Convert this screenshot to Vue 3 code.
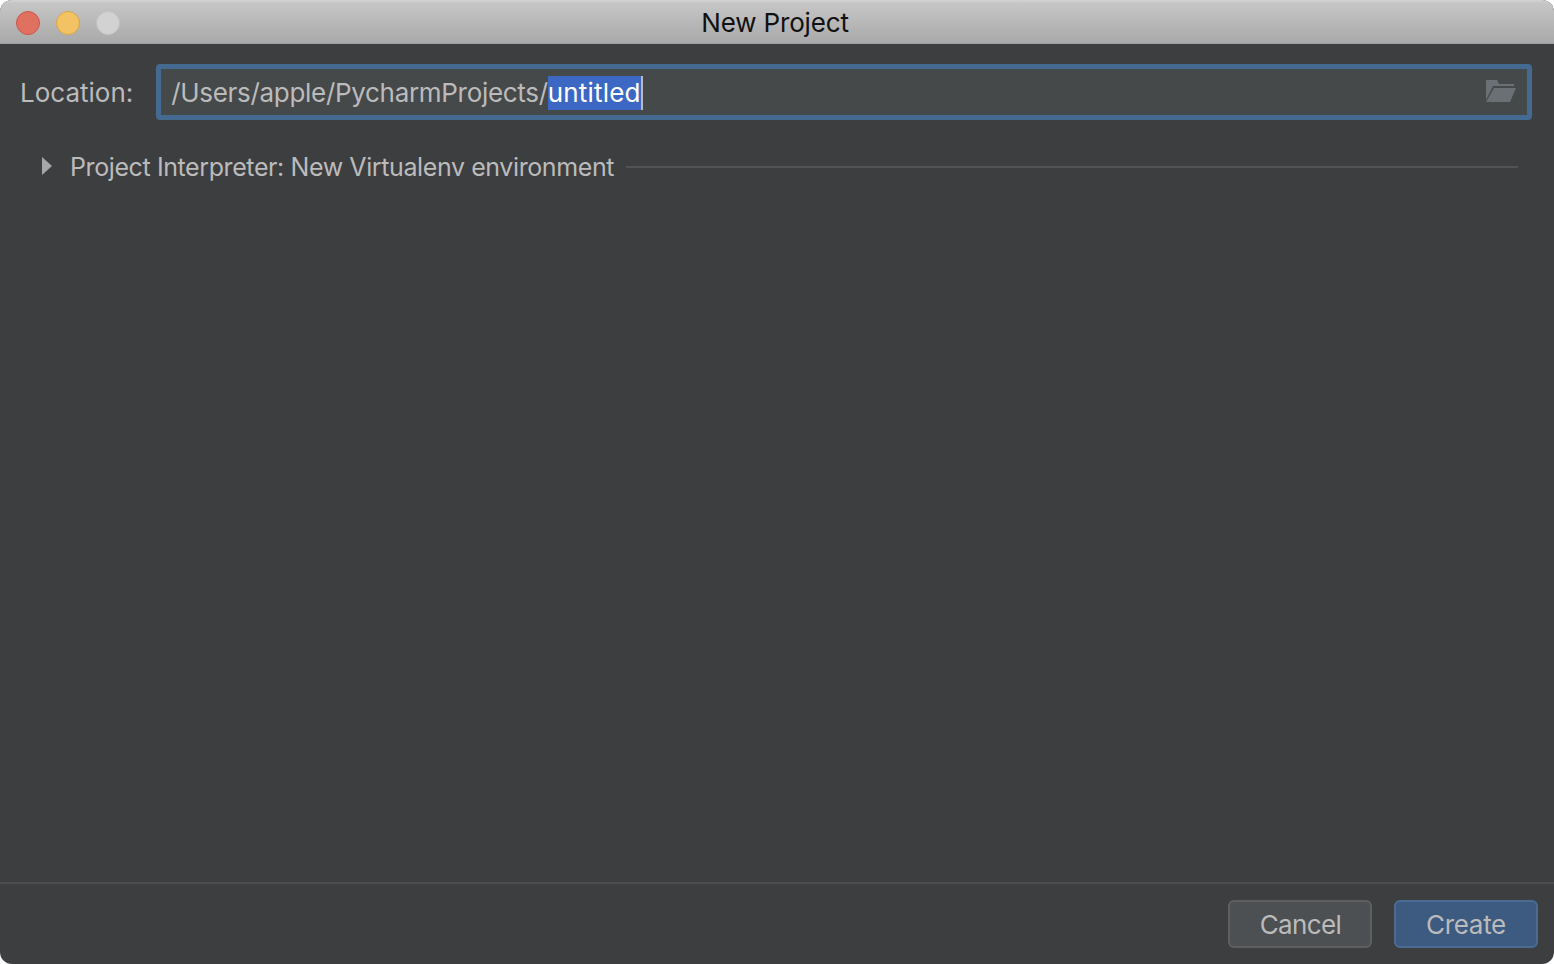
<script setup>
const lights = ['red', 'yellow', 'grey']
</script>

<template>
  <div class="window">
    <header class="titlebar">
      <div class="lights">
        <span v-for="l in lights" :key="l" class="light" :class="l"></span>
      </div>
      <div class="title">New Project</div>
      <div></div>
    </header>

    <main class="content">
      <div class="location">
        <label class="label">Location:</label>
        <div class="field">
          <div class="value">/Users/apple/PycharmProjects/<span class="sel">untitled</span><span class="caret"></span></div>
          <svg class="folder" width="30" height="24" viewBox="0 0 30 24">
            <path d="M0 0h11l2 4h15v2H7L0 20z" fill="#6a7073" />
            <path d="M8 8h22l-6 14H0z" fill="#6a7073" />
          </svg>
        </div>
      </div>

      <div class="section">
        <svg class="arrow" width="10" height="18" viewBox="0 0 10 18"><path d="M0 0l10 9-10 9z" fill="#a5a7a9" /></svg>
        <span class="section-title">Project Interpreter: New Virtualenv environment</span>
        <span class="rule"></span>
      </div>
    </main>

    <footer class="footer">
      <button class="btn">Cancel</button>
      <button class="btn primary">Create</button>
    </footer>
  </div>
</template>

<style>
html, body { margin: 0; background: #fff; overflow: hidden; }
</style>

<style scoped>
.window {
  width: 1554px;
  height: 964px;
  display: flex;
  flex-direction: column;
  background: #3d3e40;
  border-radius: 12px;
  overflow: hidden;
  font-family: Inter, "Liberation Sans", sans-serif;
  color: #bbbbbb;
}
.titlebar {
  height: 44px;
  box-sizing: border-box;
  flex: none;
  display: grid;
  grid-template-columns: 1fr auto 1fr;
  align-items: center;
  background: linear-gradient(#d4d4d4 0, #c6c6c6 3px, #a9a9a9 100%);
  border-bottom: 1px solid #9f9f9f;
}
.lights {
  display: flex;
  gap: 16px;
  padding-left: 16px;
}
.light {
  width: 24px;
  height: 24px;
  box-sizing: border-box;
  border-radius: 50%;
  border: 1px solid;
}
.red { background: #e0705f; border-color: #c9574c; }
.yellow { background: #f3c363; border-color: #d8a548; }
.grey { background: #d2d2d2; border-color: #c2c2c2; }
.title {
  font-size: 26px;
  letter-spacing: -0.15px;
  color: #111111;
  line-height: 46px;
  margin-right: 4px;
}
.content {
  flex: 1;
  padding: 20px 22px 0 20px;
}
.location {
  display: flex;
  align-items: center;
  gap: 23px;
}
.label {
  font-size: 26px;
  line-height: 58px;
  height: 56px;
  color: #bbbbbb;
}
.field {
  flex: 1;
  height: 56px;
  box-sizing: border-box;
  border: 5px solid #456a91;
  border-radius: 4px;
  background: #45494a;
  display: flex;
  align-items: center;
  justify-content: space-between;
  padding: 0 11px 0 10px;
}
.value {
  font-size: 26px;
  letter-spacing: -0.31px;
  line-height: 34px;
  padding-top: 2px;
  color: #bbbbbb;
  display: flex;
  white-space: pre;
}
.sel {
  background: #3c68c4;
  color: #ffffff;
  letter-spacing: 0.2px;
}
.caret {
  width: 2px;
  height: 34px;
  background: #bbbbbb;
}
.folder {
  display: block;
}
.section {
  display: flex;
  align-items: center;
  margin-top: 28px;
  height: 38px;
  padding-left: 22px;
  padding-right: 14px;
}
.arrow { flex: none; margin-top: -2px; }
.section-title {
  margin-left: 18px;
  font-size: 25px;
  letter-spacing: -0.4px;
  color: #bbbbbb;
  white-space: nowrap;
}
.rule {
  flex: 1;
  height: 2px;
  margin-left: 12px;
  background: #515354;
}
.footer {
  flex: none;
  height: 82px;
  box-sizing: border-box;
  border-top: 2px solid #4b4d4f;
  display: flex;
  justify-content: flex-end;
  align-items: flex-start;
  gap: 22px;
  padding: 16px 16px 0 0;
}
.btn {
  width: 144px;
  height: 48px;
  box-sizing: border-box;
  border-radius: 6px;
  border: 2px solid #5e6060;
  background: #4c5052;
  color: #bbbbbb;
  font-family: inherit;
  font-size: 26px;
  letter-spacing: -0.3px;
  padding: 0;
}
.btn:not(.primary) { letter-spacing: -0.6px; padding-left: 1px; }
.primary {
  background: #3d5a80;
  border-color: #4b6c92;
}
</style>
